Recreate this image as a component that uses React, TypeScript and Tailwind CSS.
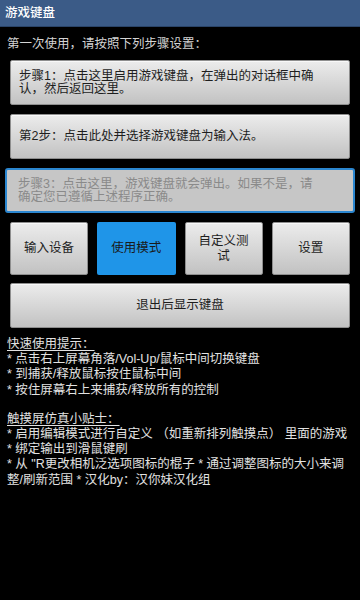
import React from 'react';

const font = { fontFamily: '"Liberation Sans", "Noto Sans CJK SC", sans-serif' };

const btn =
  'rounded-[2px] border border-[#8e8e8e] bg-gradient-to-b from-[#ececec] to-[#c2c2c2] text-[#1e1e1e] shadow-[inset_0_1px_0_#f8f8f8]';

const modes = ['输入设备', '使用模式', '自定义测试', '设置'];

const quickTips = [
  '* 点击右上屏幕角落/Vol-Up/鼠标中间切换键盘',
  '* 到捕获/释放鼠标按住鼠标中间',
  '* 按住屏幕右上来捕获/释放所有的控制',
];

const touchTips = [
  '* 启用编辑模式进行自定义 （如重新排列触摸点） 里面的游戏',
  '* 绑定输出到滑鼠键刷',
  '* 从 "R更改相机泛选项图标的棍子 * 通过调整图标的大小来调',
  '整/刷新范围 * 汉化by：汉你妹汉化组',
];

export default function App() {
  return (
    <div className="w-[360px] h-[600px] bg-black overflow-hidden" style={font}>
      {/* Title bar */}
      <div className="h-[27px] bg-[#3b5b87] border-b border-[#2a4468] flex items-center pl-[5px]">
        <span className="text-[12.5px] font-medium text-white">游戏键盘</span>
      </div>

      <p className="mt-[9px] pl-[7px] text-[12.5px] leading-[16px] text-[#d4d4d4]">
        第一次使用，请按照下列步骤设置：
      </p>

      {/* Step buttons */}
      <div className="mt-[8px] mx-[10px] flex flex-col gap-[9px]">
        <button className={`${btn} h-[45px] pl-[8px] pr-[26px] text-left text-[12.5px] leading-[13px]`}>
          步骤1：点击这里启用游戏键盘，在弹出的对话框中确认，然后返回这里。
        </button>
        <button className={`${btn} h-[45px] pl-[8px] pr-[20px] text-left text-[12.5px] leading-[13px]`}>
          第2步：点击此处并选择游戏键盘为输入法。
        </button>
      </div>

      <div className="mt-[9px] mx-[5px] h-[45px] rounded-[3px] border-2 border-[#2b86cf] bg-[#c6c6c6] flex flex-col justify-center pl-[11px] text-[12.5px] leading-[13px] text-[#8a8a8a]">
        <span>步骤3：点击这里，游戏键盘就会弹出。如果不是，请</span>
        <span>确定您已遵循上述程序正确。</span>
      </div>

      {/* Mode row */}
      <div className="mt-[9px] mx-[10px] grid grid-cols-4 gap-[9px]">
        {modes.map((m, i) => (
          <button
            key={m}
            className={
              i === 1
                ? 'h-[53px] rounded-[2px] bg-[#1f95e8] px-[8px] text-[12.5px] leading-[15px] text-[#1a1a1a]'
                : `${btn} h-[53px] px-[8px] text-[12.5px] leading-[15px]`
            }
          >
            {m}
          </button>
        ))}
      </div>

      <div className="mt-[8px] mx-[10px]">
        <button className={`${btn} w-full h-[45px] text-[12.5px]`}>退出后显示键盘</button>
      </div>

      {/* Tips */}
      <div className="mt-[9px] pl-[7px] text-[12.5px] leading-[15.2px] text-[#e2e2e2] whitespace-nowrap">
        <p className="underline underline-offset-2">快速使用提示：</p>
        {quickTips.map((t) => (
          <p key={t}>{t}</p>
        ))}
        <p className="mt-[14px] underline underline-offset-2">触摸屏仿真小贴士：</p>
        {touchTips.map((t) => (
          <p key={t}>{t}</p>
        ))}
      </div>
    </div>
  );
}
